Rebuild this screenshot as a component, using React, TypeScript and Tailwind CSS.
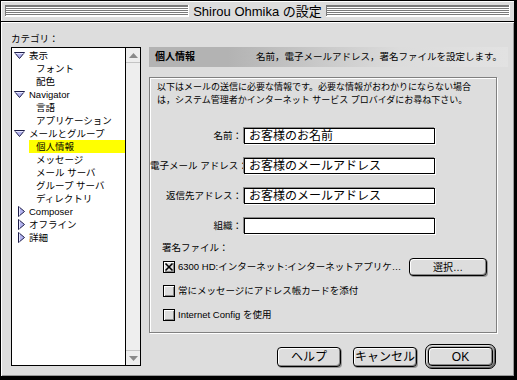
import React from 'react';

type Row = { label: string; level: 1 | 2; tri?: 'down' | 'right'; selected?: boolean };

const rows: Row[] = [
  { label: '表示', level: 1, tri: 'down' },
  { label: 'フォント', level: 2 },
  { label: '配色', level: 2 },
  { label: 'Navigator', level: 1, tri: 'down' },
  { label: '言語', level: 2 },
  { label: 'アプリケーション', level: 2 },
  { label: 'メールとグループ', level: 1, tri: 'down' },
  { label: '個人情報', level: 2, selected: true },
  { label: 'メッセージ', level: 2 },
  { label: 'メール サーバ', level: 2 },
  { label: 'グループ サーバ', level: 2 },
  { label: 'ディレクトリ', level: 2 },
  { label: 'Composer', level: 1, tri: 'right' },
  { label: 'オフライン', level: 1, tri: 'right' },
  { label: '詳細', level: 1, tri: 'right' },
];

function Triangle({ dir }: { dir: 'down' | 'right' }) {
  if (dir === 'down') {
    return (
      <svg width="11" height="7" viewBox="0 0 11 7">
        <polygon points="0.5,0.5 10.5,0.5 5.5,6.5" fill="#b4b4f0" stroke="#1c1c48" strokeWidth="1" />
        <line x1="1.5" y1="1.5" x2="9.5" y2="1.5" stroke="#e6e6ff" strokeWidth="1" />
      </svg>
    );
  }
  return (
    <svg width="7" height="11" viewBox="0 0 7 11">
      <polygon points="0.5,0.5 6.5,5.5 0.5,10.5" fill="#b4b4f0" stroke="#1c1c48" strokeWidth="1" />
      <line x1="1.5" y1="1.5" x2="1.5" y2="9.5" stroke="#e6e6ff" strokeWidth="1" />
    </svg>
  );
}

function CheckBox({ checked }: { checked?: boolean }) {
  return (
    <div className="w-[12px] h-[12px] shrink-0 border border-black bg-[#dddddd] shadow-[inset_1px_1px_0_#ffffff,inset_-1px_-1px_0_#8a8a8a] flex items-center justify-center">
      {checked && (
        <svg width="10" height="10" viewBox="0 0 10 10">
          <line x1="1.5" y1="1.5" x2="8.5" y2="8.5" stroke="#000" strokeWidth="1.6" />
          <line x1="8.5" y1="1.5" x2="1.5" y2="8.5" stroke="#000" strokeWidth="1.6" />
        </svg>
      )}
    </div>
  );
}

function MacButton({ label, className }: { label: string; className: string }) {
  return (
    <div
      className={`flex items-center justify-center rounded-[4px] border border-black bg-[#dddddd] shadow-[inset_1px_1px_0_#ffffff,inset_-1px_-1px_0_#888888,1px_1px_0_#999999] text-black ${className}`}
    >
      {label}
    </div>
  );
}

function Field({ label, value }: { label: string; value: string }) {
  return (
    <div className="flex items-center h-[16px]">
      <div className="w-[92px] text-right text-[9.5px] leading-none whitespace-nowrap">{label}</div>
      <div className="ml-[2px] w-[191px] h-[16px] border border-black bg-white shadow-[-1px_-1px_0_#8a8a8a,1px_1px_0_#ffffff] flex items-center pl-[4px] text-[12px] leading-none whitespace-nowrap overflow-hidden">
        {value}
      </div>
    </div>
  );
}

export default function App() {
  return (
    <div className="w-[517px] h-[380px] bg-black font-['Liberation_Sans','Noto_Sans_CJK_JP',sans-serif] text-black select-none">
      <div className="w-[517px] h-[380px] border-l border-t border-black border-r-[3px] border-b-[4px] flex flex-col">
        {/* Title bar */}
        <div className="h-[21px] shrink-0 bg-[#dddddd] border-b border-black flex items-center px-[4px] shadow-[inset_1px_1px_0_#ffffff]">
          <div className="flex-1 h-[12px] bg-[repeating-linear-gradient(to_bottom,#ffffff_0px,#ffffff_1px,#7a7a7a_1px,#7a7a7a_2px)] border-r border-b border-[#ffffff] shadow-[inset_1px_1px_0_#7a7a7a]" />
          <div className="px-[4px] text-[13px] leading-none whitespace-nowrap">Shirou Ohmika の設定</div>
          <div className="flex-1 h-[12px] bg-[repeating-linear-gradient(to_bottom,#ffffff_0px,#ffffff_1px,#7a7a7a_1px,#7a7a7a_2px)] border-r border-b border-[#ffffff] shadow-[inset_1px_1px_0_#7a7a7a]" />
        </div>

        {/* Body */}
        <div className="flex-1 bg-[#dddddd] shadow-[inset_1px_1px_0_#ffffff,inset_-1px_-1px_0_#999999] flex pl-[10px]">
          {/* Category column */}
          <div className="w-[130px] flex flex-col">
            <div className="mt-[10px] h-[13px] text-[9.5px] leading-[13px]">カテゴリ：</div>
            <div className="mt-[2px] h-[319px] border border-black bg-white flex">
              <div className="flex-1 pt-[1px]">
                {rows.map((r) => {
                  if (r.level === 1) {
                    return (
                      <div key={r.label} className="h-[13px] flex items-center pl-[2px] text-[9.5px] leading-none whitespace-nowrap">
                        <div className="w-[11px] flex items-center justify-end">
                          <Triangle dir={r.tri!} />
                        </div>
                        <span className="ml-[4px]">{r.label}</span>
                      </div>
                    );
                  }
                  if (r.selected) {
                    return (
                      <div key={r.label} className="h-[13px] ml-[17px] pl-[7px] bg-[#ffff00] flex items-center text-[9.5px] leading-none whitespace-nowrap">
                        {r.label}
                      </div>
                    );
                  }
                  return (
                    <div key={r.label} className="h-[13px] flex items-center pl-[24px] text-[9.5px] leading-none whitespace-nowrap">
                      {r.label}
                    </div>
                  );
                })}
              </div>
              {/* Scrollbar */}
              <div className="w-[15px] border-l border-black bg-[#eeeeee] flex flex-col justify-between">
                <div className="h-[15px] border-b border-[#c4c4c4] flex items-center justify-center">
                  <svg width="9" height="5" viewBox="0 0 9 5">
                    <polygon points="4.5,0 9,5 0,5" fill="#8a8a8a" />
                  </svg>
                </div>
                <div className="h-[15px] border-t border-[#c4c4c4] flex items-center justify-center">
                  <svg width="9" height="5" viewBox="0 0 9 5">
                    <polygon points="0,0 9,0 4.5,5" fill="#8a8a8a" />
                  </svg>
                </div>
              </div>
            </div>
          </div>

          {/* Right column */}
          <div className="ml-[8px] w-[359px] flex flex-col">
            <div className="mt-[25px] h-[20px] flex items-center justify-between px-[6px] bg-[linear-gradient(to_right,#b3b3b3_0%,#b3b3b3_22%,#dcdcdc_70%,#e2e2e2_100%)]">
              <span className="text-[10px] font-bold leading-none">個人情報</span>
              <span className="text-[9.5px] leading-none whitespace-nowrap">名前，電子メールアドレス，署名ファイルを設定します。</span>
            </div>

            {/* Group box */}
            <div className="mt-[10px] w-[348px] h-[256px] border border-[#808080] shadow-[inset_1px_1px_0_#ffffff,1px_1px_0_#ffffff] flex flex-col">
              <div className="pt-[3px] pl-[7px] text-[9px] leading-[13px] whitespace-nowrap">
                <div>以下はメールの送信に必要な情報です。必要な情報がおわかりにならない場合</div>
                <div>は，システム管理者かインターネット サービス プロバイダにお尋ね下さい。</div>
              </div>

              <div className="mt-[21px] flex flex-col gap-[14px]">
                <Field label="名前：" value="お客様のお名前" />
                <Field label="電子メール アドレス：" value="お客様のメールアドレス" />
                <Field label="返信先アドレス：" value="お客様のメールアドレス" />
                <Field label="組織：" value="" />
              </div>

              <div className="mt-[8px] h-[12px] pl-[12px] text-[9.5px] leading-[12px]">署名ファイル：</div>

              <div className="mt-[4px] h-[18px] flex items-center pl-[13px]">
                <CheckBox checked />
                <span className="ml-[3px] text-[9.5px] leading-none whitespace-nowrap">6300 HD:インターネット:インターネットアプリケ…</span>
                <MacButton label="選択…" className="ml-auto mr-[9px] w-[78px] h-[18px] text-[10px]" />
              </div>
              <div className="mt-[6px] h-[18px] flex items-center pl-[13px]">
                <CheckBox />
                <span className="ml-[3px] text-[9.5px] leading-none whitespace-nowrap">常にメッセージにアドレス帳カードを添付</span>
              </div>
              <div className="mt-[6px] h-[18px] flex items-center pl-[13px]">
                <CheckBox />
                <span className="ml-[3px] text-[9.5px] leading-none whitespace-nowrap">Internet Config を使用</span>
              </div>
            </div>

            {/* Buttons */}
            <div className="mt-[11px] h-[25px] flex items-center justify-end pr-[12px]">
              <MacButton label="ヘルプ" className="w-[64px] h-[20px] text-[12px]" />
              <MacButton label="キャンセル" className="ml-[12px] w-[64px] h-[20px] text-[12px]" />
              <div className="ml-[8px] w-[71px] h-[25px] rounded-[7px] border border-black bg-[#a8a8a8] shadow-[inset_1px_1px_0_#e0e0e0,inset_-1px_-1px_0_#666666] p-[2px] flex">
                <div className="flex-1 flex items-center justify-center rounded-[4px] border border-black bg-[#dddddd] shadow-[inset_1px_1px_0_#ffffff,inset_-1px_-1px_0_#888888] text-[12px]">
                  OK
                </div>
              </div>
            </div>
          </div>
        </div>
      </div>
    </div>
  );
}
